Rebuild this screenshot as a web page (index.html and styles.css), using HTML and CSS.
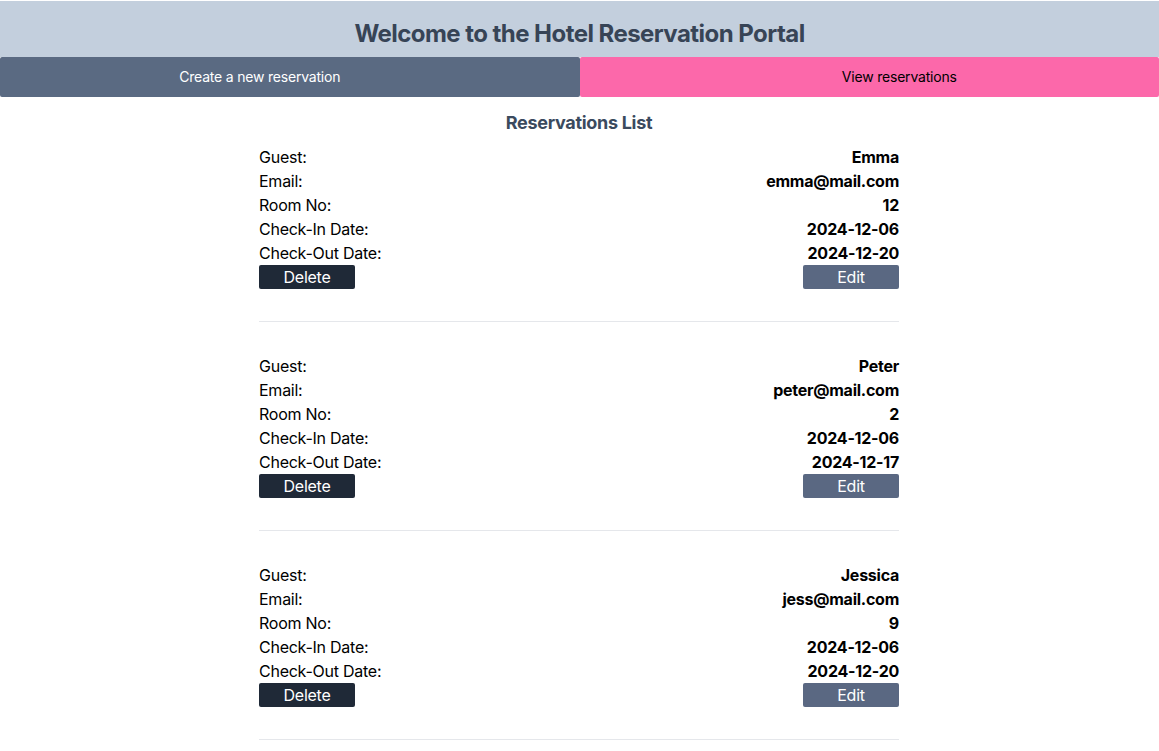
FILE: index.html
```html
<!DOCTYPE html>
<html>
<head>
<meta charset="utf-8">
<link rel="stylesheet" href="styles.css">
</head>
<body>
<header class="header"><h1 class="title">Welcome to the Hotel Reservation Portal</h1></header>
<nav class="nav">
  <button class="nav-btn nav-create">Create a new reservation</button>
  <button class="nav-btn nav-view">View reservations</button>
</nav>
<main class="main">
  <h2 class="list-title">Reservations List</h2>
  <div class="card">
    <div class="row"><span>Guest:</span><b>Emma</b></div>
    <div class="row"><span>Email:</span><b>emma@mail.com</b></div>
    <div class="row"><span>Room No:</span><b>12</b></div>
    <div class="row"><span>Check-In Date:</span><b>2024-12-06</b></div>
    <div class="row"><span>Check-Out Date:</span><b>2024-12-20</b></div>
    <div class="actions"><button class="btn btn-delete">Delete</button><button class="btn btn-edit">Edit</button></div>
  </div>
  <hr class="divider">
  <div class="card">
    <div class="row"><span>Guest:</span><b>Peter</b></div>
    <div class="row"><span>Email:</span><b>peter@mail.com</b></div>
    <div class="row"><span>Room No:</span><b>2</b></div>
    <div class="row"><span>Check-In Date:</span><b>2024-12-06</b></div>
    <div class="row"><span>Check-Out Date:</span><b>2024-12-17</b></div>
    <div class="actions"><button class="btn btn-delete">Delete</button><button class="btn btn-edit">Edit</button></div>
  </div>
  <hr class="divider">
  <div class="card">
    <div class="row"><span>Guest:</span><b>Jessica</b></div>
    <div class="row"><span>Email:</span><b>jess@mail.com</b></div>
    <div class="row"><span>Room No:</span><b>9</b></div>
    <div class="row"><span>Check-In Date:</span><b>2024-12-06</b></div>
    <div class="row"><span>Check-Out Date:</span><b>2024-12-20</b></div>
    <div class="actions"><button class="btn btn-delete">Delete</button><button class="btn btn-edit">Edit</button></div>
  </div>
  <hr class="divider">
</main>
</body>
</html>
```
FILE: styles.css
```css
* { box-sizing: border-box; }
html, body { margin: 0; padding: 0; }
body {
  padding-top: 1px;
  font-family: Inter, "Noto Sans", "Liberation Sans", sans-serif;
  color: #000;
  background: #fff;
}
.header {
  background: #c3cfdd;
  height: 56px;
  padding-top: 17px;
}
.title {
  margin: 0;
  text-align: center;
  font-size: 24px;
  line-height: 32px;
  font-weight: 700;
  letter-spacing: -0.55px;
  color: #374456;
}
.nav {
  display: flex;
  height: 40px;
}
.nav-btn {
  flex: 1;
  border: none;
  margin: 0;
  font-family: inherit;
  font-size: 14px;
  letter-spacing: -0.2px;
  border-radius: 2px;
}
.nav-create { background: #5a6a82; color: #fff; padding: 0 60px 2px 0; }
.nav-view { background: #fc68aa; color: #000; padding: 0 0 2px 60px; }
.main {
  width: 641px;
  padding-right: 1px;
  margin: 0 auto;
  padding-top: 12px;
}
.list-title {
  margin: 0 0 8px;
  text-align: center;
  font-size: 18px;
  line-height: 28px;
  font-weight: 700;
  letter-spacing: -0.3px;
  color: #3b4a5e;
}
.row {
  display: flex;
  justify-content: space-between;
  font-size: 16px;
  line-height: 24px;
  letter-spacing: -0.25px;
}
.row b { font-weight: 700; }
.actions {
  display: flex;
  justify-content: space-between;
}
.btn {
  width: 96px;
  height: 24px;
  border: none;
  border-radius: 2px;
  color: #fff;
  font-family: inherit;
  font-size: 16px;
  line-height: 24px;
  letter-spacing: -0.25px;
  padding: 0;
}
.btn-delete { background: #1f2937; }
.btn-edit { background: #5a6882; }
.divider {
  border: none;
  border-top: 1px solid #e5e7eb;
  margin: 32px 0;
}
```
